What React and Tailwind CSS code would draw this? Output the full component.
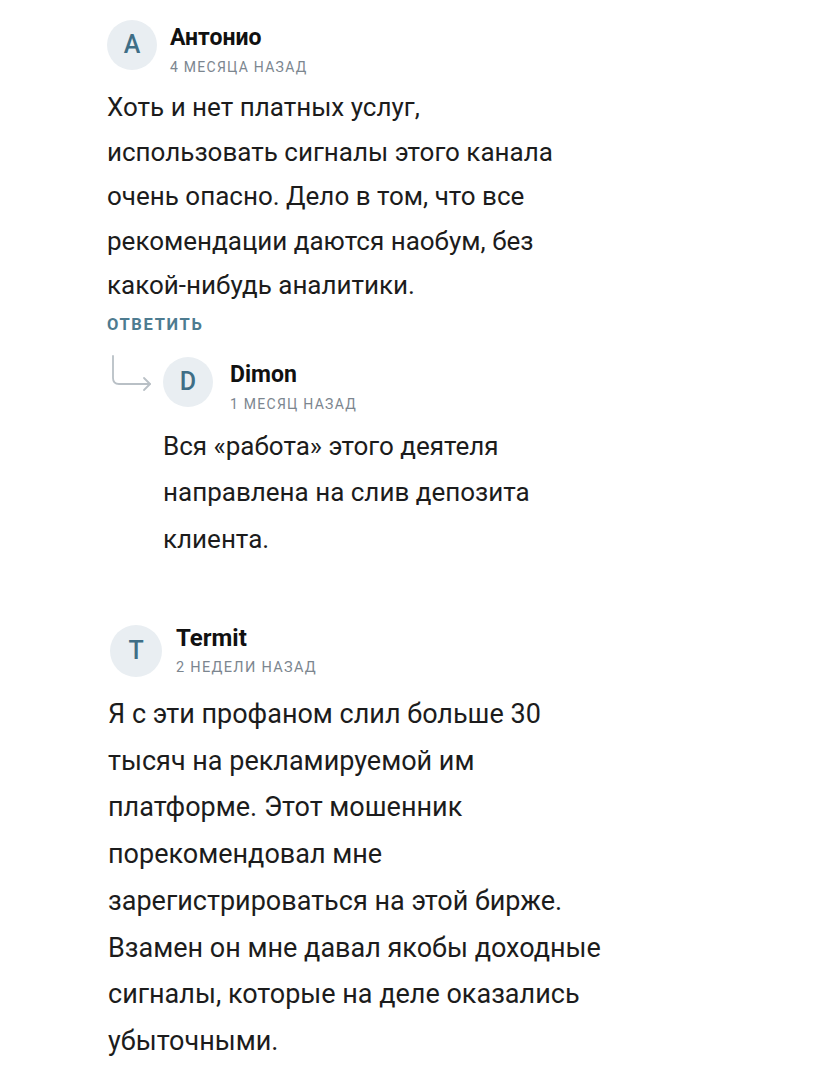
import React from "react";

const font = { fontFamily: "Roboto, 'Noto Sans', 'Liberation Sans', sans-serif" };

function Avatar({ letter, size = "w-[50px] h-[50px]" }) {
  return (
    <div className={`${size} shrink-0 rounded-full bg-[#e9eef2] flex items-center justify-center text-[25px] font-medium text-[#3f6e86]`}>
      {letter}
    </div>
  );
}

function Header({ letter, name, time, gap, avatarSize, pad = "pt-[6px]", nameSize = "text-[23px]", timeSize = "text-[14px]" }) {
  return (
    <div className={`flex items-start ${gap}`}>
      <Avatar letter={letter} size={avatarSize} />
      <div className={`${pad} h-0`}>
        <div className={`${nameSize} font-bold leading-none text-[#111]`}>{name}</div>
        <div className={`mt-[11px] ${timeSize} font-normal uppercase tracking-[0.09em] leading-none text-[#7c868f]`}>
          {time}
        </div>
      </div>
    </div>
  );
}

function ReplyArrow() {
  return (
    <svg width="46" height="40" viewBox="0 0 46 40" fill="none" stroke="#b9c0c6" strokeWidth="1.8" strokeLinecap="round" strokeLinejoin="round">
      <path d="M3 2 V24 Q3 30 9 30 H40" />
      <path d="M34 24 L40 30 L34 36" />
    </svg>
  );
}

export default function App() {
  return (
    <div className="min-h-screen bg-white text-[#1c1c1c] pl-[107px] pr-6 pt-5 antialiased" style={font}>
      {/* first comment */}
      <div>
        <Header letter="A" name="Антонио" time="4 месяца назад" gap="gap-[13px]" />
        <p className="mt-[15px] text-[26px] leading-[44.5px]">
          Хоть и нет платных услуг,
          <br />
          использовать сигналы этого канала
          <br />
          очень опасно. Дело в том, что все
          <br />
          рекомендации даются наобум, без
          <br />
          какой-нибудь аналитики.
        </p>
        <div className="mt-[7px] text-[16.5px] font-bold uppercase tracking-[0.1em] leading-[20px] text-[#4d7b90]">
          Ответить
        </div>

        {/* reply */}
        <div className="relative ml-[56px] mt-[22px]">
          <div className="absolute left-[-53px] top-[-3px]">
            <ReplyArrow />
          </div>
          <Header letter="D" name="Dimon" time="1 месяц назад" gap="gap-[17px]" />
          <p className="mt-[16px] text-[26px] leading-[46.5px]">
            Вся «работа» этого деятеля
            <br />
            направлена на слив депозита
            <br />
            клиента.
          </p>
        </div>
      </div>

      {/* second comment */}
      <div className="ml-[3px] mt-[63px]">
        <Header
          letter="T"
          name="Termit"
          time="2 недели назад"
          gap="gap-[14px]"
          avatarSize="w-[52px] h-[52px]"
          pad="pt-[1px]"
          nameSize="text-[24px]"
          timeSize="text-[14.5px]"
        />
        <p className="ml-[-2px] mt-[14px] text-[27px] leading-[46.7px]">
          Я с эти профаном слил больше 30
          <br />
          тысяч на рекламируемой им
          <br />
          платформе. Этот мошенник
          <br />
          порекомендовал мне
          <br />
          зарегистрироваться на этой бирже.
          <br />
          Взамен он мне давал якобы доходные
          <br />
          сигналы, которые на деле оказались
          <br />
          убыточными.
        </p>
      </div>
    </div>
  );
}
